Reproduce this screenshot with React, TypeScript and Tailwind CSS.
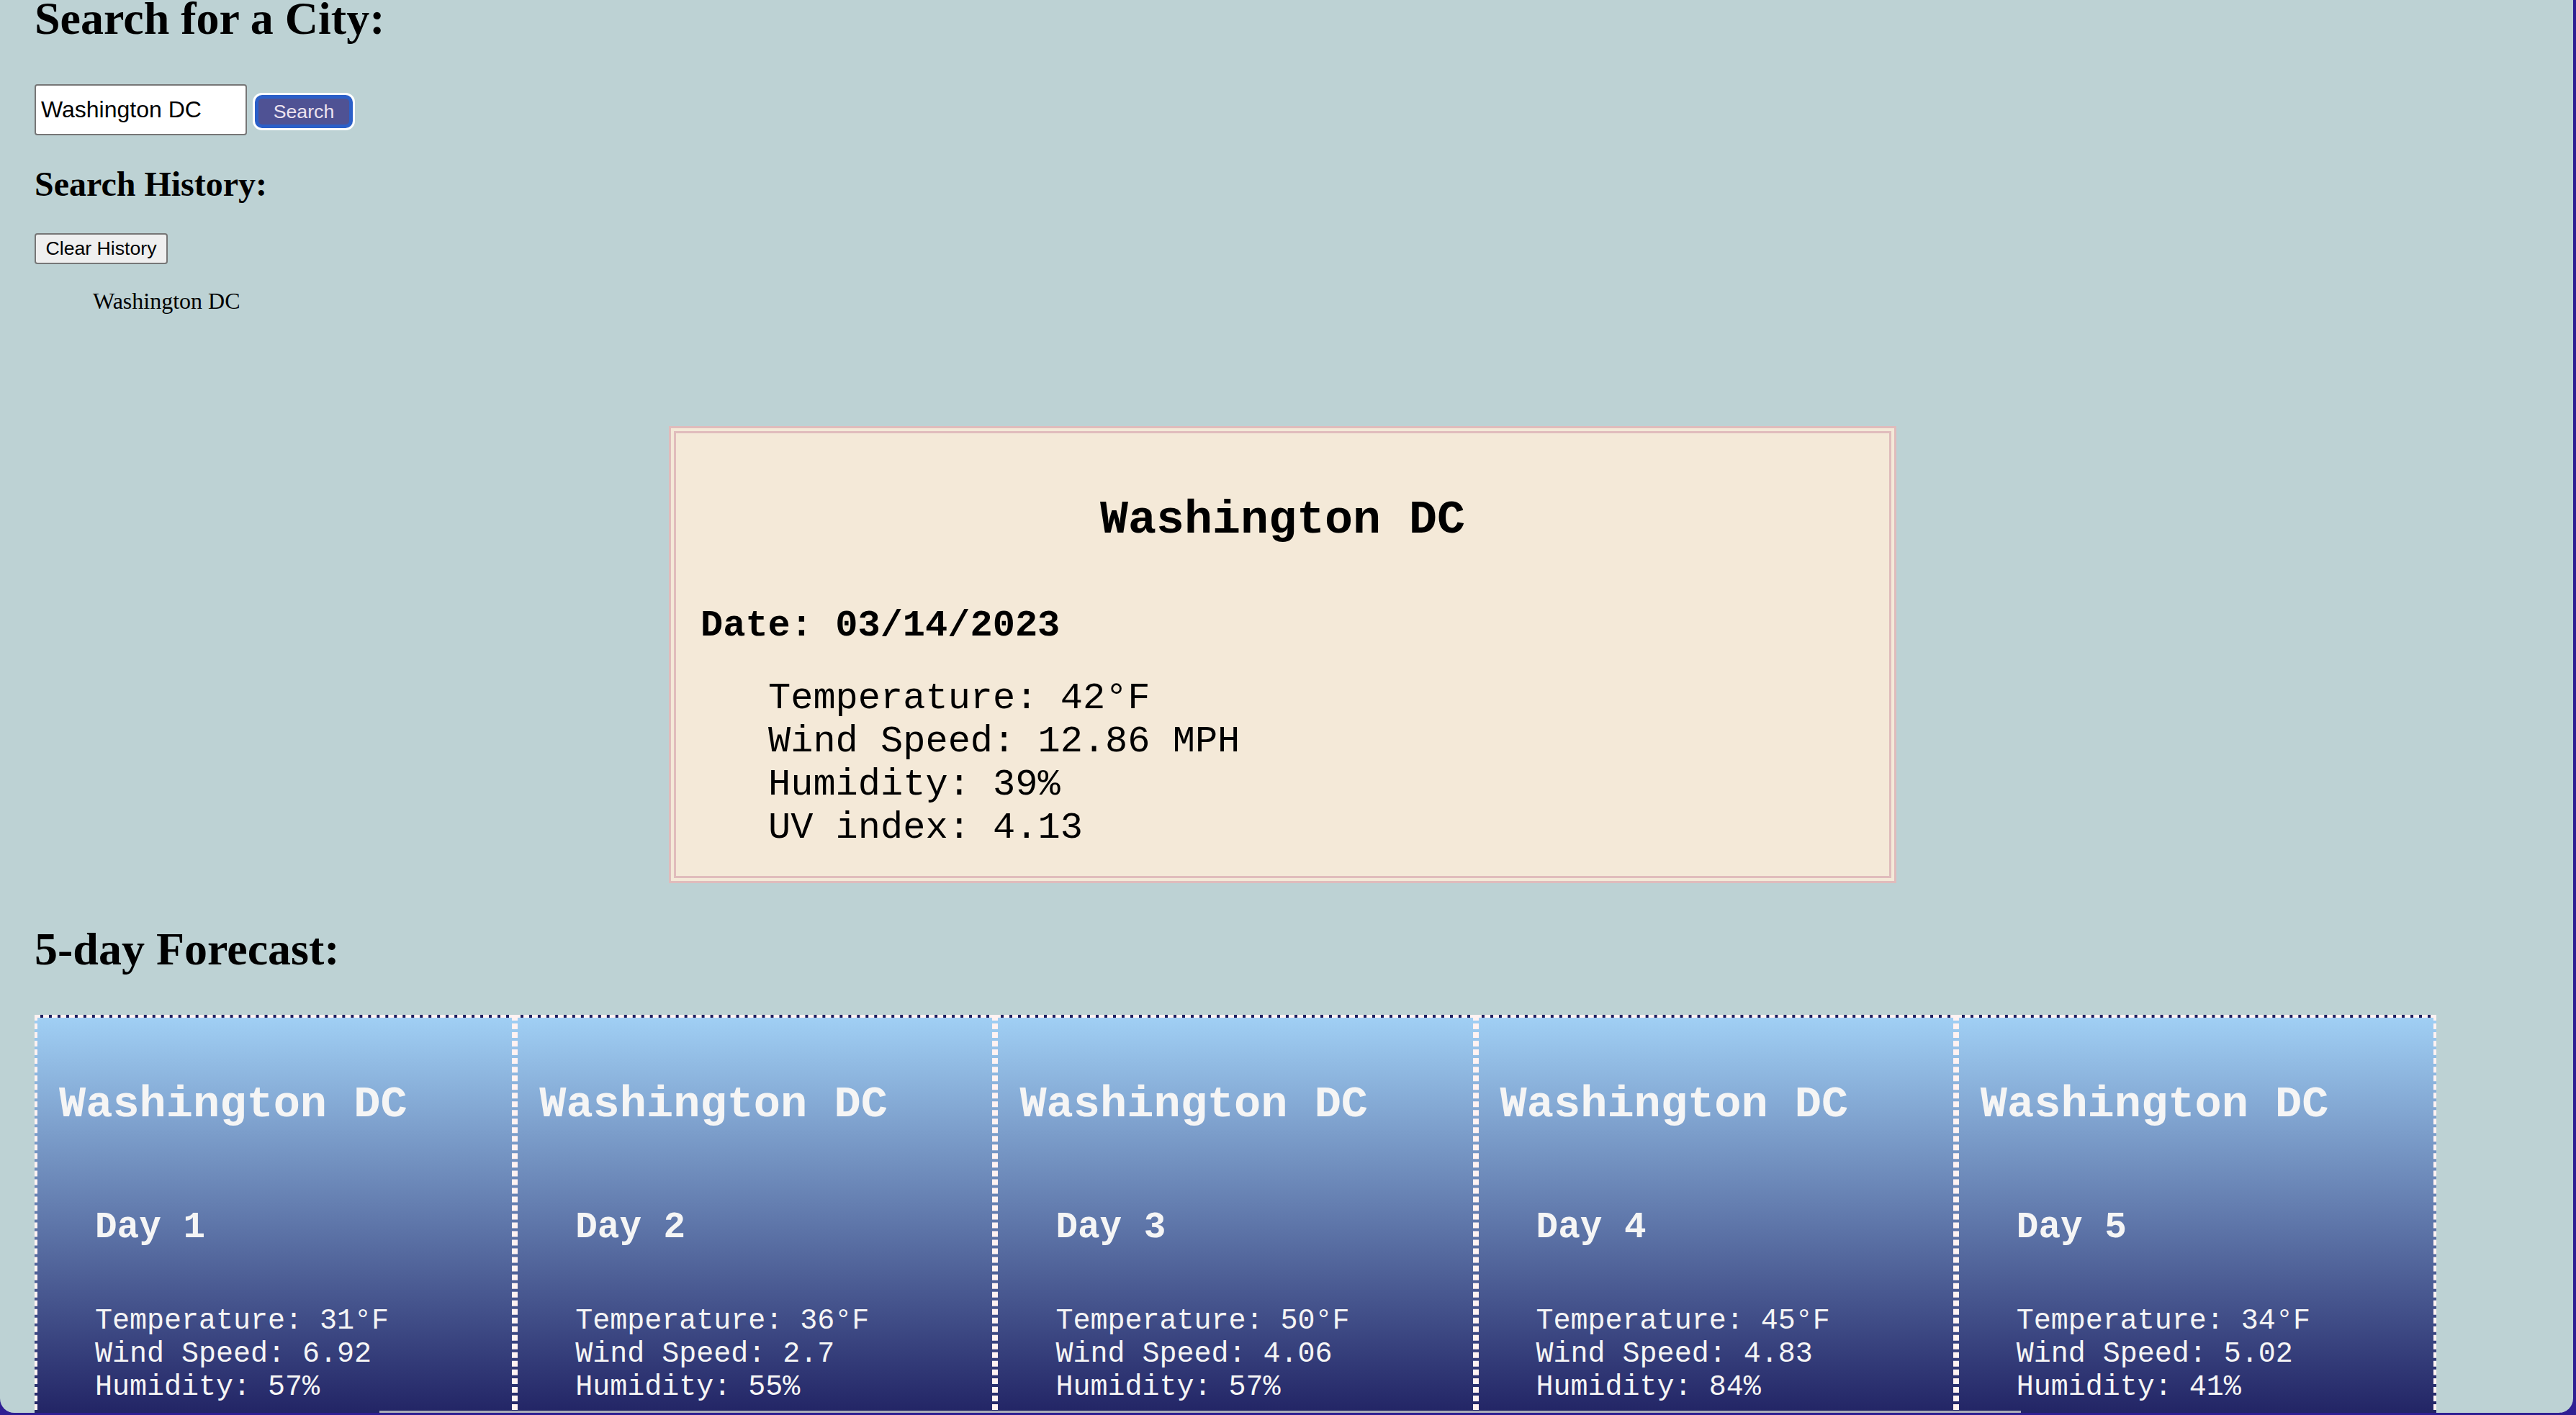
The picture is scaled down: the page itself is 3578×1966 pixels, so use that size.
import React from 'react';

const mono = "font-['Courier_New','Liberation_Mono',monospace]";
const sans = "font-['Liberation_Sans',Arial,sans-serif]";

const current = {
  city: 'Washington DC',
  date: '03/14/2023',
  temp: 42,
  wind: '12.86',
  humidity: 39,
  uv: '4.13',
};

const forecast = [
  { day: 1, temp: 31, wind: '6.92', humidity: 57 },
  { day: 2, temp: 36, wind: '2.7', humidity: 55 },
  { day: 3, temp: 50, wind: '4.06', humidity: 57 },
  { day: 4, temp: 45, wind: '4.83', humidity: 84 },
  { day: 5, temp: 34, wind: '5.02', humidity: 41 },
];

function ForecastCard({ day, temp, wind, humidity }: (typeof forecast)[number]) {
  return (
    <div
      className={`border-[4px] border-dashed border-[#fff2f2] bg-[linear-gradient(to_bottom,#a0cff4,#1c1c5e)] pb-[40px] text-[#f5f5f5] ${mono}`}
    >
      <h1 className="whitespace-nowrap pl-[30px] pt-[90px] text-[62px] font-bold leading-[62px]">
        {current.city}
      </h1>
      <h3 className="mt-[114px] pl-[80px] text-[51px] font-bold leading-[51px]">Day {day}</h3>
      <div className="mt-[82px] pl-[80px] text-[40px] leading-[46px]">
        <p>Temperature: {temp}°F</p>
        <p>Wind Speed: {wind}</p>
        <p>Humidity: {humidity}%</p>
      </div>
    </div>
  );
}

export default function App() {
  return (
    <div className="h-[1966px] w-full overflow-hidden bg-[#2f1f93]">
      <div className="relative mr-[4px] h-[1963px] overflow-hidden rounded-b-[20px] bg-[#bdd2d4] font-['Liberation_Serif',serif] text-black">
        <div className="pl-[48px]">
          <h1 className="mt-[-6px] text-[64px] font-bold leading-[64px]">Search for a City:</h1>
          <div className="mt-[59px] flex items-start">
            <input
              defaultValue="Washington DC"
              className={`h-[71px] w-[295px] rounded-[4px] border-2 border-[#767676] bg-white px-[7px] text-[32px] text-black outline-none ${sans}`}
            />
            <button
              className={`ml-[11px] mt-[15px] h-[46px] w-[136px] rounded-[10px] border-[5px] border-[#2b5fc8] bg-[#4f5294] text-[26.67px] leading-none text-[#ece2ef] shadow-[0_0_0_3px_#ffffff] ${sans}`}
            >
              Search
            </button>
          </div>
          <h2 className="mt-[44px] text-[48px] font-bold leading-[48px]">Search History:</h2>
          <button
            className={`mt-[44px] block h-[43px] w-[185px] rounded-[4px] border-2 border-[#767676] bg-[#efefef] text-[26.67px] leading-none text-black ${sans}`}
          >
            Clear History
          </button>
          <ul className="mt-[35px] pl-[81px]">
            <li className="text-[32px] leading-[32px]">Washington DC</li>
          </ul>
        </div>

        <section
          className={`ml-[929px] mt-[158px] w-[1705px] border-[10px] border-double border-[#e0bcbc] bg-[#f4e9d8] pb-[36px] ${mono}`}
        >
          <h1 className="mt-[89px] text-center text-[65px] font-bold leading-[65px]">{current.city}</h1>
          <h2 className="mt-[84px] pl-[34px] text-[52px] font-bold leading-[60px]">Date: {current.date}</h2>
          <div className="mt-[41px] pl-[128px] text-[52px] leading-[60px]">
            <p>Temperature: {current.temp}°F</p>
            <p>Wind Speed: {current.wind} MPH</p>
            <p>Humidity: {current.humidity}%</p>
            <p>UV index: {current.uv}</p>
          </div>
        </section>

        <h1 className="mt-[60px] pl-[48px] text-[64px] font-bold leading-[64px]">5-day Forecast:</h1>
        <div className="ml-[48px] mt-[59px] grid w-[3336px] grid-cols-5">
          {forecast.map((f) => (
            <ForecastCard key={f.day} {...f} />
          ))}
        </div>

        <div className="absolute bottom-0 left-[527px] h-[3px] w-[2280px] bg-[#a9abb8]" />
      </div>
    </div>
  );
}
